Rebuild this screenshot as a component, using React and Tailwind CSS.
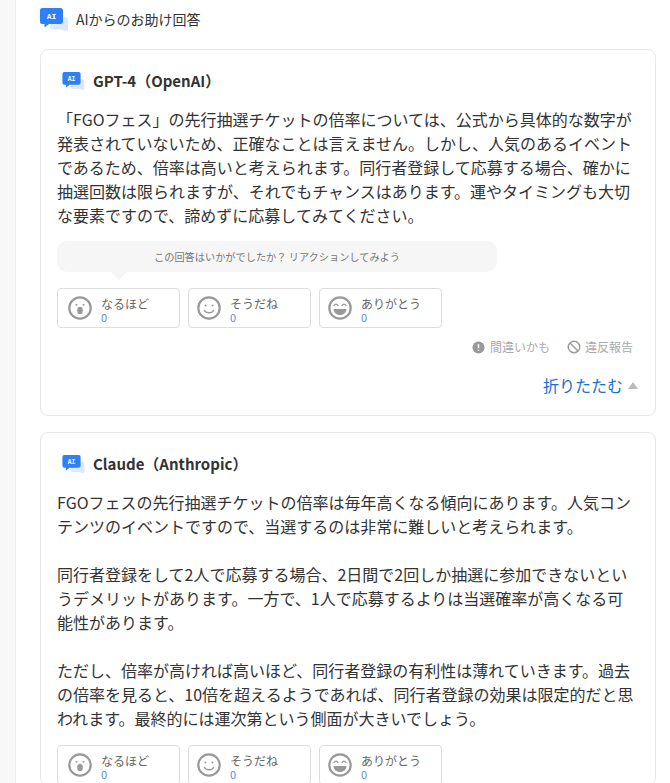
import React from 'react';

const font = { fontFamily: '"Noto Sans CJK JP", sans-serif' };

function AiIcon({ size = 'w-[28px] h-[24px]' }) {
  return (
    <svg viewBox="0 0 28 24" className={`${size} shrink-0`}>
      <path d="M13 9h12a3 3 0 0 1 3 3v8a3 3 0 0 1-3 3v0l-3-1.500h-9a3 3 0 0 1-3-3z" fill="#dbe9fb" />
      <path d="M2.500 0h18A2.500 2.500 0 0 1 23 2.500v11a2.500 2.500 0 0 1-2.500 2.500H9l-4.500 3.500V16h-2A2.500 2.500 0 0 1 0 13.500v-11A2.500 2.500 0 0 1 2.500 0z" fill="#2f80f6" />
      <text x="11.500" y="11" textAnchor="middle" fontSize="8" fontWeight="700" fill="#fff" fontFamily="Liberation Mono, monospace">AI</text>
    </svg>
  );
}

function Face({ type }) {
  return (
    <svg viewBox="0 0 24 24" className="w-[24px] h-[24px] shrink-0" fill="none" stroke="#999" strokeWidth="2.200">
      <circle cx="12" cy="12" r="10.700" />
      {type === 'wow' && (
        <>
          <circle cx="8.500" cy="8.800" r="1" fill="#999" stroke="none" />
          <circle cx="15.500" cy="8.800" r="1" fill="#999" stroke="none" />
          <ellipse cx="12" cy="14.500" rx="2.800" ry="3.800" fill="#999" stroke="none" />
        </>
      )}
      {type === 'smile' && (
        <>
          <circle cx="8.500" cy="9.500" r="1" fill="#999" stroke="none" />
          <circle cx="15.500" cy="9.500" r="1" fill="#999" stroke="none" />
          <path d="M7.500 14.500c1.500 3 7.500 3 9 0" strokeWidth="1.400" strokeLinecap="round" />
        </>
      )}
      {type === 'laugh' && (
        <>
          <path d="M6 9.500c1-1.800 3-1.800 4 0M14 9.500c1-1.800 3-1.800 4 0" strokeWidth="1.400" strokeLinecap="round" />
          <path d="M5.500 13h13c0 3.500-3 6-6.500 6s-6.500-2.500-6.500-6z" fill="#999" stroke="none" />
        </>
      )}
    </svg>
  );
}

function Reactions() {
  const items = [
    ['wow', 'なるほど', 'pl-[10px]'],
    ['smile', 'そうだね', 'pl-[8px]'],
    ['laugh', 'ありがとう', 'pl-[8px]'],
  ];
  return (
    <div className="flex gap-[8px]">
      {items.map(([type, label, pad]) => (
        <div key={type} className={`w-[123px] h-[40px] border border-[#ddd] rounded-[4px] bg-white flex items-center gap-[9px] ${pad}`}>
          <Face type={type} />
          <div className="flex flex-col pt-[2px]">
            <span className="text-[12px] leading-[15px] text-[#666]">{label}</span>
            <span className="text-[11px] leading-[12px] text-[#5a8fc8]">0</span>
          </div>
        </div>
      ))}
    </div>
  );
}

function Card({ title, children, footer }) {
  return (
    <div className="border border-[#e8e8e8] rounded-[8px] bg-white px-[16px] pt-[20px]">
      <div className="flex items-center gap-[8px] h-[22px] pl-[5px]">
        <AiIcon size="w-[23px] h-[19px]" />
        <span className="text-[15px] font-bold text-[#333]">{title}</span>
      </div>
      <div className="mt-[15px] text-[16px] leading-[24px] text-[#333] whitespace-nowrap">{children}</div>
      {footer}
    </div>
  );
}

export default function App() {
  return (
    <div className="h-[783px] overflow-hidden bg-white flex" style={font}>
      <div className="w-[16px] shrink-0 bg-[#f8f8f8] border-r border-[#eee]" />
      <div className="w-[616px] ml-[24px]">
        <div className="flex gap-[8px] pt-[8px] h-[49px] items-start">
          <AiIcon />
          <span className="text-[14px] leading-[22px] text-[#333]">AIからのお助け回答</span>
        </div>
        <Card
          title="GPT-4（OpenAI）"
          footer={
            <div className="pb-[19px]">
              <div className="relative mt-[14px] w-[440px] h-[31px] bg-[#f6f6f6] rounded-[10px] flex items-center justify-center text-[10.2px] text-[#777]">
                この回答はいかがでしたか？ リアクションしてみよう
                <div className="absolute left-[54px] top-[31px] w-0 h-0 border-x-[8px] border-x-transparent border-t-[8px] border-t-[#f6f6f6]" />
              </div>
              <div className="mt-[16px]"><Reactions /></div>
              <div className="flex justify-end items-center gap-[17px] mt-[10px] pr-[6px] text-[12px] leading-[18px] text-[#aaa]">
                <span className="flex items-center gap-[5px]">
                  <svg viewBox="0 0 14 14" className="w-[13px] h-[13px]">
                    <circle cx="7" cy="7" r="6.500" fill="#999" />
                    <path d="M7 3.500v4.200M7 9.500v1.200" stroke="#fff" strokeWidth="1.600" />
                  </svg>
                  間違いかも
                </span>
                <span className="flex items-center gap-[4px]">
                  <svg viewBox="0 0 14 14" className="w-[14px] h-[14px]" fill="none" stroke="#999" strokeWidth="1.400">
                    <circle cx="7" cy="7" r="5.800" />
                    <path d="M3 3l8 8" />
                  </svg>
                  違反報告
                </span>
              </div>
              <div className="flex justify-end items-center gap-[5px] mt-[18px] pr-[1px]">
                <span className="text-[16px] leading-[22px] text-[#1a6fd0]">折りたたむ</span>
                <span className="w-0 h-0 border-x-[5px] border-x-transparent border-b-[7px] border-b-[#bbb]" />
              </div>
            </div>
          }
        >
          「FGOフェス」の先行抽選チケットの倍率については、公式から具体的な数字が<br />
          発表されていないため、正確なことは言えません。しかし、人気のあるイベント<br />
          であるため、倍率は高いと考えられます。同行者登録して応募する場合、確かに<br />
          抽選回数は限られますが、それでもチャンスはあります。運やタイミングも大切<br />
          な要素ですので、諦めずに応募してみてください。
        </Card>
        <div className="mt-[16px]">
          <Card
            title="Claude（Anthropic）"
            footer={<div className="mt-[15px]"><Reactions /></div>}
          >
            FGOフェスの先行抽選チケットの倍率は毎年高くなる傾向にあります。人気コン<br />
            テンツのイベントですので、当選するのは非常に難しいと考えられます。<br />
            <br />
            同行者登録をして2人で応募する場合、2日間で2回しか抽選に参加できないとい<br />
            うデメリットがあります。一方で、1人で応募するよりは当選確率が高くなる可<br />
            能性があります。<br />
            <br />
            ただし、倍率が高ければ高いほど、同行者登録の有利性は薄れていきます。過去<br />
            の倍率を見ると、10倍を超えるようであれば、同行者登録の効果は限定的だと思<br />
            われます。最終的には運次第という側面が大きいでしょう。
          </Card>
        </div>
      </div>
    </div>
  );
}
